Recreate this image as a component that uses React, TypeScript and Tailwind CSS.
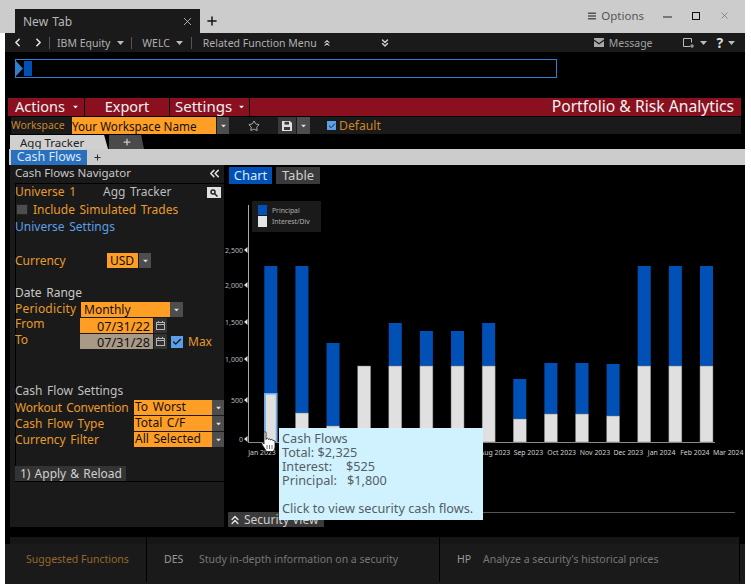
import React from "react";
import { ChevronLeft, ChevronRight, ChevronsUp, ChevronsDown, ChevronsLeft, Star, X, Plus, Check } from "lucide-react";

const Caret = ({ className = "" }: { className?: string }) => (
  <svg width="7" height="4" viewBox="0 0 7 4" className={className}><path d="M0 0h7L3.5 4z" fill="currentColor" /></svg>
);

const Arrow = ({ w = "w-[12px]" }: { w?: string }) => (
  <div className={`${w} h-full bg-[#4d4d4d] flex items-center justify-center text-[#dddddd]`}>
    <Caret className="scale-75" />
  </div>
);

const Cal = () => (
  <div className="w-[13px] h-full bg-[#333333] flex items-center justify-center">
    <svg width="9" height="9" viewBox="0 0 9 9" fill="none" stroke="#b5b5b5"><rect x="0.5" y="1.5" width="8" height="7" /><path d="M0.5 3.5h8M2.5 0v2M6.5 0v2" /></svg>
  </div>
);

const Sep = () => <div className="w-px h-[12px] bg-[#555555]" />;

const bars: [number, number | null, number][] = [
  [266, 393, 442], [266, 413, 442], [343, 426, 442], [366, null, 442], [323, 366, 442],
  [331, 366, 442], [331, 366, 442], [323, 366, 442], [379, 419, 442], [363, 414, 442],
  [363, 414, 442], [364, 416, 442], [266, 366, 442], [266, 366, 442], [266, 366, 442],
];
const months: [string, number][] = [["Jan 2023",0],["Aug 2023",7],["Sep 2023",8],["Oct 2023",9],["Nov 2023",10],["Dec 2023",11],["Jan 2024",12],["Feb 2024",13],["Mar 2024",14]];
const ticks: [string, number][] = [["2,500",250],["2,000",285],["1,500",322],["1,000",359],["500",400],["0",439]];

function Chart() {
  return (
    <svg width="520" height="327" viewBox="225 185 520 327" className="block" fontFamily="'Noto Sans', sans-serif">
      <line x1="248.5" y1="205" x2="248.5" y2="442" stroke="#a8a8a8" />
      <line x1="248" y1="442.5" x2="715" y2="442.5" stroke="#8a8a8a" />
      {ticks.map(([t, y]) => (
        <g key={t}>
          <text x="243" y={y + 3} textAnchor="end" fontSize="7" fill="#b8b8b8">{t}</text>
          <path d={`M244 ${y}l3.5 -3v6z`} fill="#e0e0e0" />
        </g>
      ))}
      <rect x="252" y="201" width="69" height="31" fill="#1a1a1a" />
      <rect x="258" y="205" width="9" height="10" fill="#0050b5" />
      <rect x="258" y="216" width="9" height="11" fill="#e4e4e4" />
      <text x="272" y="213" fontSize="6.8" fill="#b0b0b0">Principal</text>
      <text x="272" y="224" fontSize="6.8" fill="#b0b0b0">Interest/Div</text>
      {bars.map(([top, mid, base], i) => {
        const x = 264.3 + i * 31.12;
        const s = mid ?? top;
        return (
          <g key={i}>
            {mid !== null && <rect x={x} y={top} width="13" height={s - top} fill="#0050b5" />}
            <rect x={x} y={s} width="13" height={base - s} fill="#e0e0e0" stroke={i === 0 ? "none" : "#777777"} strokeWidth={i === 0 ? 0 : 0.5} />
            {i === 0 && <rect x={x + 0.75} y={s + 0.75} width="11.5" height={base - s - 1} fill="#e0e0e0" stroke="#6aaaf0" strokeWidth="1.5" />}
          </g>
        );
      })}
      {months.map(([m, i]) => (
        <text key={m} x={262 + i * 33.3} y="455" textAnchor="middle" fontSize="6.9" fill="#d0d0d0">{m}</text>
      ))}
    </svg>
  );
}

const FieldRow = ({ label, value, tight = false }: { label: string; value: string; tight?: boolean }) => (
  <div className="flex items-center h-[15px] mb-px">
    <div className={`w-[119px] text-[#e89a2b] whitespace-nowrap ${tight ? "tracking-[-0.25px]" : ""}`}>{label}</div>
    <div className="w-[78px] h-full bg-[#ff9e24] text-[#111111] pl-px leading-[14px] whitespace-nowrap">{value}</div>
    <Arrow />
  </div>
);

export default function App() {
  return (
    <div className="relative w-[751px] h-[584px] bg-white overflow-hidden text-[12px] leading-none text-[#cfcfcf] font-['Noto_Sans',sans-serif]">
      {/* window title */}
      <div className="w-[745px] h-[33px] bg-[#cccccc] flex items-end">
        <div className="ml-[15px] w-[185px] h-[24px] bg-[#1a1a1a] flex items-center justify-between pl-[8px] pr-[6px] text-[#b8b8b8] text-[12px]">
          <span className="mt-[2px] [word-spacing:1px]">New Tab</span>
          <X size={13} strokeWidth={1.5} color="#cccccc" />
        </div>
        <Plus size={14} strokeWidth={2.5} color="#111111" className="ml-[5px] mb-[5px]" />
        <div className="ml-auto self-center flex items-center text-[#555555] text-[11.5px] pr-[15px] mt-[-2px]">
          <svg width="8" height="8" viewBox="0 0 8 8" className="mr-[5px]"><path d="M0 0.5h8v1.5H0zM0 3.2h8v1.5H0zM0 6h8v1.5H0z" fill="#555555" /></svg>
          <span>Options</span>
          <div className="w-[9px] h-[1.5px] bg-[#777777] ml-[19px] mt-[3px]" />
          <div className="w-[8px] h-[8px] border border-[#111111] ml-[20px]" />
          <X size={11} strokeWidth={1.2} color="#555555" className="ml-[19px]" />
        </div>
      </div>

      <div className="ml-[5px] w-[740px] bg-black">
        {/* toolbar */}
        <div className="h-[19px] bg-[#1a1a1a] flex items-center text-[10.5px] text-[#b0b0b0]">
          <ChevronLeft size={13} strokeWidth={3} color="#e0e0e0" className="ml-[6px]" />
          <ChevronRight size={13} strokeWidth={3} color="#e0e0e0" className="ml-[8px]" />
          <div className="ml-[4px]"><Sep /></div>
          <span className="ml-[7px] mt-px">IBM Equity</span>
          <Caret className="ml-[7px] text-[#bbbbbb]" />
          <div className="ml-[7px]"><Sep /></div>
          <span className="ml-[10px] mt-px">WELC</span>
          <Caret className="ml-[6px] text-[#bbbbbb]" />
          <div className="ml-[8px]"><Sep /></div>
          <span className="ml-[11px] mt-px">Related Function Menu</span>
          <ChevronsUp size={10} strokeWidth={2.5} className="ml-[5px] text-[#cccccc]" />
          <ChevronsDown size={12} strokeWidth={3} className="ml-[47px] text-[#cccccc]" />
          <svg width="10" height="9" viewBox="0 0 10 9" className="ml-[203px]"><path d="M0 0h10v1.5L5 5 0 1.5zM0 3l5 3.5L10 3v6H0z" fill="#a8a8a8" /></svg>
          <span className="ml-[5px] text-[#a0a0a0] mt-px">Message</span>
          <svg width="12" height="10" viewBox="0 0 12 10" fill="none" stroke="#bbbbbb" className="ml-[30px]"><path d="M7 8.5H0.5V0.5h8v4" /><path d="M9 6v4M7 8h4" /></svg>
          <Caret className="ml-[5px] text-[#bbbbbb]" />
          <span className="ml-[10px] text-[14px] font-bold text-[#dddddd]">?</span>
          <Caret className="ml-[5px] text-[#bbbbbb]" />
        </div>

        {/* command line */}
        <div className="h-[46px] pt-[7px] pl-[10px]">
          <div className="w-[542px] h-[19px] border border-[#2f80d0] flex items-center">
            <svg width="7" height="15" viewBox="0 0 7 15"><path d="M0 0l7 7.5L0 15z" fill="#2f80d0" /></svg>
            <div className="w-[8px] h-[15px] bg-[#0050b5] ml-[1px]" />
          </div>
        </div>

        {/* red function bar */}
        <div className="ml-[3px] w-[733px] h-[18px] bg-[#8a1020] flex items-center text-[#f0f0f0] text-[14.5px]">
          <div className="w-[76px] h-full flex items-center pl-[7px]"><span className="mt-[-2px]">Actions</span><Caret className="ml-[7px] scale-75" /></div>
          <div className="w-px h-full bg-black" />
          <div className="w-[84px] h-full flex items-center justify-center"><span className="mt-[-1px]">Export</span></div>
          <div className="w-px h-full bg-black" />
          <div className="w-[79px] h-full flex items-center pl-[5px]"><span className="mt-[-1px] text-[15px]">Settings</span><Caret className="ml-[6px] scale-75" /></div>
          <div className="w-px h-full bg-black" />
          <span className="ml-auto pr-[7px] text-[15.7px] whitespace-nowrap">Portfolio &amp; Risk Analytics</span>
        </div>

        {/* workspace row */}
        <div className="ml-[6px] mt-px w-[730px] h-[17px] bg-[#1a1a1a] flex items-center text-[12.5px]">
          <span className="w-[60px] text-[#c9862a] text-[10.4px]">Workspace</span>
          <div className="ml-px w-[144px] h-full bg-[#ff9e24] text-[#111111] text-[11.7px] leading-[18px] whitespace-nowrap">Your Workspace Name</div>
          <div className="ml-px w-[12px] h-full"><Arrow /></div>
          <Star size={12} strokeWidth={1.5} className="ml-[19px] text-[#dddddd]" />
          <div className="ml-[18px] w-[18px] h-full bg-[#3a3a3a] flex items-center justify-center">
            <svg width="10" height="10" viewBox="0 0 10 10"><path d="M0 0h8l2 2v8H0z" fill="#e0e0e0" /><rect x="2.5" y="0.8" width="4.5" height="2.8" fill="#3a3a3a" /><rect x="2" y="6" width="6" height="3" fill="#3a3a3a" /></svg>
          </div>
          <div className="ml-px w-[13px] h-full"><Arrow w="w-[13px]" /></div>
          <div className="ml-[17px] w-[9px] h-[9px] bg-[#5b9fe8] flex items-center justify-center"><Check size={8} strokeWidth={3} color="#222222" /></div>
          <span className="ml-[3px] text-[#c9862a] text-[12.2px] mt-px">Default</span>
        </div>

        {/* tabs */}
        <div className="h-[15px] flex items-end pl-[5px] text-[11.5px]">
          <div className="w-[98px] h-[14px] bg-[#d0d0d0] text-[#222222] pl-[10px] leading-[15px] [clip-path:polygon(0_0,96%_0,100%_100%,0_100%)]">Agg Tracker</div>
          <div className="ml-px w-[35px] h-[14px] bg-[#4a4a4a] flex items-center justify-center [clip-path:polygon(0_0,92%_0,100%_100%,0_100%)]"><Plus size={10} strokeWidth={3} color="#cccccc" /></div>
        </div>
        <div className="ml-[4px] w-[736px] h-[16px] bg-[#cccccc] flex items-center">
          <div className="ml-[2px] w-[76px] h-[15px] bg-[#2a70bd] text-[#d8e8f8] text-[12.5px] flex items-center justify-center">Cash Flows</div>
          <Plus size={9} strokeWidth={2.5} color="#222222" className="ml-[6px]" />
        </div>

        {/* main */}
        <div className="flex h-[372px]">
          <div className="ml-[5px] w-[214px] h-[362px] bg-[#1a1a1a]">
            <div className="h-[17px] pl-[5px] pr-[2px] flex items-center justify-between text-[#c8c8c8] text-[11.5px] mb-px">
              <span className="mt-[-2px]">Cash Flows Navigator</span>
              <ChevronsLeft size={15} strokeWidth={2.5} color="#e0e0e0" />
            </div>
            <div className="ml-[5px] h-[283px] border-l border-t border-black text-[12px] [word-spacing:1.5px]">
              <div className="-ml-px">
                <div className="h-[17px] flex items-center text-[#e89a2b]">
                  <span className="w-[88px] mt-[-2px]">Universe 1</span>
                  <span className="text-[#bdbdbd] mt-[-2px]">Agg Tracker</span>
                  <div className="ml-auto w-[14px] h-[11px] bg-[#e0e0e0] mr-[3px] flex items-center justify-center">
                    <svg width="8" height="8" viewBox="0 0 8 8" fill="none" stroke="#222222" strokeWidth="1.5"><circle cx="3" cy="3" r="2" /><path d="M4.5 4.5L7.5 7.5" /></svg>
                  </div>
                </div>
                <div className="h-[17px] flex items-center text-[#e89a2b] pl-px">
                  <div className="w-[12px] h-[11px] bg-[#4d4d4d] border border-[#222222]" />
                  <span className="ml-[5px]">Include Simulated Trades</span>
                </div>
                <div className="h-[18px] flex items-center text-[#5b9fe8]">Universe Settings</div>
                <div className="h-[16px]" />
                <div className="h-[17px] flex items-center">
                  <span className="w-[92px] text-[#e89a2b]">Currency</span>
                  <div className="w-[31px] h-[15px] bg-[#ff9e24] text-[#111111] pl-[3px] leading-[15px]">USD</div>
                  <div className="ml-px w-[12px] h-[15px]"><Arrow /></div>
                </div>
                <div className="h-[15px]" />
                <div className="h-[17px] flex items-center text-[#c8c8c8]">Date Range</div>
                <div className="h-[15px] mt-px flex items-center">
                  <span className="w-[66px] text-[#e89a2b] tracking-[0.2px] mt-[-2px]">Periodicity</span>
                  <div className="w-[89px] h-full bg-[#ff9e24] text-[#111111] pl-[3px] leading-[16px]">Monthly</div>
                  <div className="w-[13px] h-full"><Arrow w="w-[13px]" /></div>
                </div>
                <div className="h-[15px] mt-px flex items-center">
                  <span className="w-[65px] text-[#e89a2b] mt-[-4px]">From</span>
                  <div className="w-[73px] h-full bg-[#ff9e24] text-[#111111] pr-[3px] text-right text-[12.7px] leading-[16px]">07/31/22</div>
                  <div className="ml-px h-full"><Cal /></div>
                </div>
                <div className="h-[15px] mt-px flex items-center">
                  <span className="w-[65px] text-[#e89a2b] mt-[-3px]">To</span>
                  <div className="w-[73px] h-full bg-[#a89a86] text-[#111111] pr-[3px] text-right text-[12.7px] leading-[16px]">07/31/28</div>
                  <div className="ml-px h-full"><Cal /></div>
                  <div className="ml-[4px] w-[12px] h-[12px] bg-[#5b9fe8] flex items-center justify-center"><Check size={10} strokeWidth={3} color="#111111" /></div>
                  <span className="ml-[5px] text-[#e89a2b]">Max</span>
                </div>
                <div className="h-[33px]" />
                <div className="h-[17px] flex items-center text-[#c0c0c0]">Cash Flow Settings</div>
                <div className="mt-px"><FieldRow label="Workout Convention" value="To Worst" tight /></div>
                <FieldRow label="Cash Flow Type" value="Total C/F" />
                <FieldRow label="Currency Filter" value="All Selected" />
              </div>
            </div>
            <div className="ml-[5px] border-b border-black">
              <div className="w-[111px] h-[15px] bg-[#333333] pl-[5px] leading-[15px] text-[#d0d0d0] [word-spacing:1px]">1) Apply &amp; Reload</div>
            </div>
          </div>

          <div className="ml-[5px] w-[516px]">
            <div className="h-[20px] flex pt-[2px] text-[13px]">
              <div className="w-[43px] h-[17px] bg-[#0050b5] text-[#d8e8f8] flex items-center justify-center">Chart</div>
              <div className="ml-[4px] w-[44px] h-[17px] bg-[#3a3a3a] text-[#d0d0d0] flex items-center justify-center">Table</div>
            </div>
            <div className="ml-[-4px]"><Chart /></div>
            <div className="flex h-[15px] ml-[-1px]">
              <div className="w-[96px] h-full bg-[#3a3a3a] flex items-center text-[12px] text-[#d0d0d0] whitespace-nowrap">
                <ChevronsUp size={14} strokeWidth={2.5} color="#e0e0e0" className="mr-[2px]" />
                Security View
              </div>
              <div className="w-[411px] h-px bg-[#555555]" />
            </div>
          </div>
        </div>

        {/* footer */}
        <div className="h-[47px] bg-[linear-gradient(#000000_7px,#1a1a1a_7px)]">
          <div className="ml-[5px] w-[730px] h-[47px] bg-[linear-gradient(#161616_7px,#1a1a1a_7px)] flex text-[10.5px] text-[#777777]">
            <div className="w-[137px] h-[45px] border-r border-black flex items-center pl-[16px] text-[#96682a] whitespace-nowrap">Suggested Functions</div>
            <div className="w-[293px] h-[45px] border-r border-black flex items-center pl-[17px] whitespace-nowrap">
              <span className="w-[35px] text-[#999999]">DES</span>
              <span>Study in-depth information on a security</span>
            </div>
            <div className="w-[300px] h-[45px] border-r border-black flex items-center pl-[17px] whitespace-nowrap">
              <span className="w-[26px] text-[#999999]">HP</span>
              <span>Analyze a security's historical prices</span>
            </div>
          </div>
        </div>
      </div>

      {/* tooltip */}
      <div className="absolute left-[279px] top-[428px] w-[204px] h-[92px] bg-[#d0f2ff] text-[#555e66] text-[12.7px] leading-[14px] pl-[3px] pt-[3px] whitespace-pre">
        <div>Cash Flows</div>
        <div>Total: $2,325</div>
        <div><span className="inline-block w-[64px]">Interest:</span>$525</div>
        <div><span className="inline-block w-[65px]">Principal:</span>$1,800</div>
        <div className="h-[14px]" />
        <div>Click to view security cash flows.</div>
      </div>

      {/* hand cursor */}
      <svg width="16" height="22" viewBox="0 0 16 22" className="absolute left-[261px] top-[431px]">
        <path d="M3 1.5c0-1 2-1 2 0v7l.5-1c1-.5 2 0 2 1 .5-1 2.2-.6 2.2.5.5-1 2.3-.5 2.3.7.7-.5 2-.2 2 1V16c0 2-1 3-2 4.5H5.5C4 18 2 15.5.8 13c-.5-1 .8-2 1.7-1L3 13z" fill="#ffffff" stroke="#111111" strokeWidth="0.8" />
        <path d="M6 14v4M8.5 14v4M11 14v4" stroke="#111111" strokeWidth="0.6" />
      </svg>
    </div>
  );
}
